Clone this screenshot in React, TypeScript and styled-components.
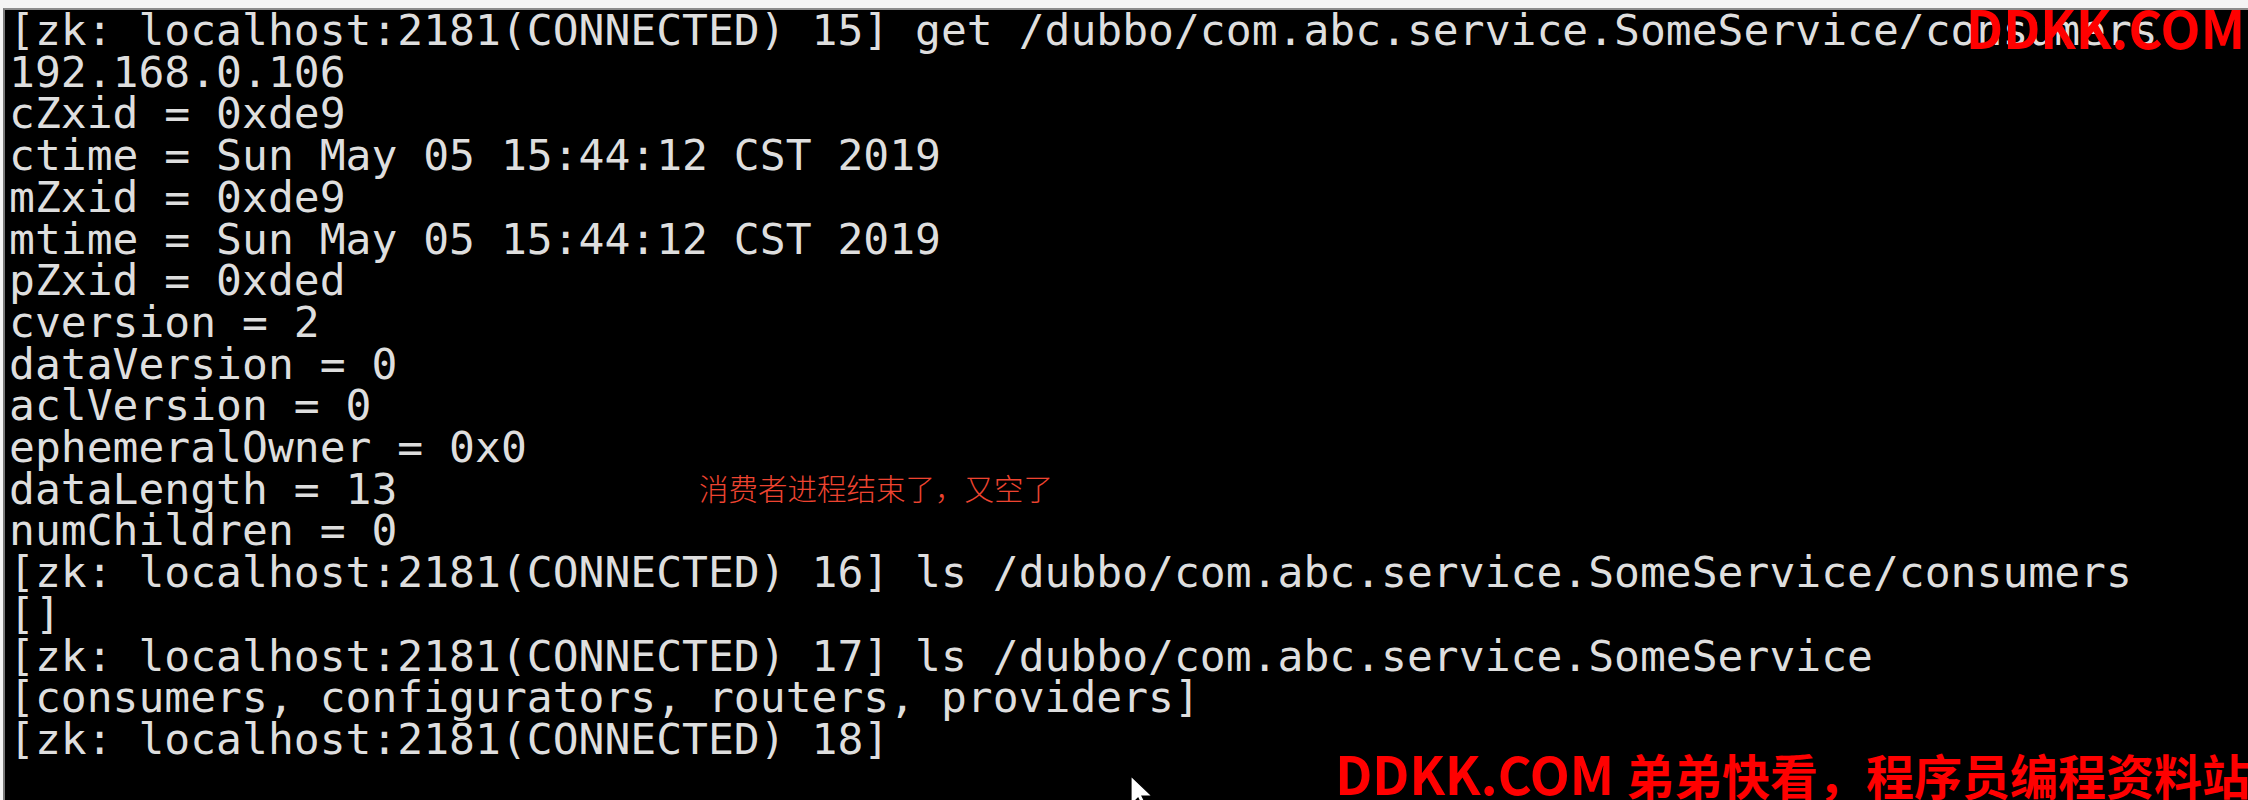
import styled, { createGlobalStyle } from "styled-components";

const GlobalStyle = createGlobalStyle`
    html, body {
        margin: 0;
        padding: 0;
        background: #f4f4f4;
        overflow: hidden;
    }
`

const Window = styled.div`
    position: relative;
    box-sizing: border-box;
    width: 2245px;
    height: 792px;
    margin: 8px 0 0 3px;
    border-top: 2px solid #8c8c8c;
    border-left: 2px solid #7a7a7a;
    background: #000;
    overflow: hidden;
`

const Output = styled.div`
    display: flex;
    flex-direction: column;
    padding: 0 0 0 4px;
    font-family: "DejaVu Sans Mono", monospace;
    font-size: 43px;
    line-height: 41.7px;
    color: #dedede;
    white-space: pre;
`

const Line = styled.div``

// red hand-written note over the terminal
const Note = styled.div`
    position: absolute;
    left: 694px;
    top: 456px;
    font-family: "Noto Sans CJK SC", sans-serif;
    font-weight: 300;
    font-size: 29.5px;
    color: #ee4430;
    white-space: nowrap;
`

const Watermark = styled.div<{ $top?: number; $bottom?: number; $right: number }>`
    position: absolute;
    right: ${(p) => p.$right}px;
    ${(p) => (p.$top !== undefined ? `top: ${p.$top}px;` : "")}
    ${(p) => (p.$bottom !== undefined ? `bottom: ${p.$bottom}px;` : "")}
    font-family: "Noto Sans CJK SC", sans-serif;
    font-weight: 700;
    font-size: 52px;
    line-height: 1;
    color: #ff0000;
    white-space: nowrap;
`

const Slogan = styled.span`
    font-size: 48px;
`

const Pointer = styled.svg`
    position: absolute;
    left: 1125px;
    top: 765px;
`

const lines = [
    "[zk: localhost:2181(CONNECTED) 15] get /dubbo/com.abc.service.SomeService/consumers",
    "192.168.0.106",
    "cZxid = 0xde9",
    "ctime = Sun May 05 15:44:12 CST 2019",
    "mZxid = 0xde9",
    "mtime = Sun May 05 15:44:12 CST 2019",
    "pZxid = 0xded",
    "cversion = 2",
    "dataVersion = 0",
    "aclVersion = 0",
    "ephemeralOwner = 0x0",
    "dataLength = 13",
    "numChildren = 0",
    "[zk: localhost:2181(CONNECTED) 16] ls /dubbo/com.abc.service.SomeService/consumers",
    "[]",
    "[zk: localhost:2181(CONNECTED) 17] ls /dubbo/com.abc.service.SomeService",
    "[consumers, configurators, routers, providers]",
    "[zk: localhost:2181(CONNECTED) 18]",
]

export default function App() {
    return (
        <>
            <GlobalStyle />
            <Window>
                <Output>
                    {lines.map((l, i) => (
                        <Line key={i}>{l}</Line>
                    ))}
                </Output>
                <Note>消费者进程结束了，又空了</Note>
                <Watermark $top={-9} $right={3}>DDKK.COM</Watermark>
                <Watermark $bottom={1} $right={-2}>
                    DDKK.COM <Slogan>弟弟快看，程序员编程资料站</Slogan>
                </Watermark>
                <Pointer width="24" height="36" viewBox="0 0 24 36">
                    <path d="M1 1 L1 30 L8 23 L13 33 L17 31 L12 21 L22 21 Z" fill="#fff" stroke="#000" strokeWidth="1.2" />
                </Pointer>
            </Window>
        </>
    );
}
